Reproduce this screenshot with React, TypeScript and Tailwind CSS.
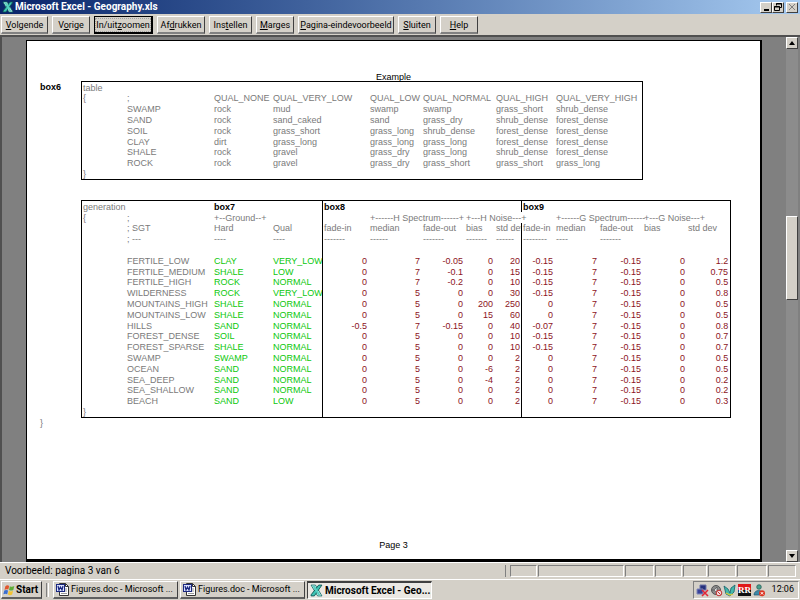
import React from "react";
import clsx from "clsx";

const raised =
  "border border-t-white border-l-white border-b-[#404040] border-r-[#404040] bg-[#d4d0c8]";
const sunken =
  "border border-t-[#808080] border-l-[#808080] border-b-white border-r-white";

const toolbarButtons = [
  { pre: "", key: "V", post: "olgende", width: "w-[47px]" },
  { pre: "V", key: "o", post: "rige", width: "w-[38px]" },
  { pre: "In/uit", key: "z", post: "oomen", width: "w-[59px]", focused: true },
  { pre: "Af", key: "d", post: "rukken", width: "w-[48px]" },
  { pre: "Ins", key: "t", post: "ellen", width: "w-[43px]" },
  { pre: "", key: "M", post: "arges", width: "w-[38px]" },
  { pre: "", key: "P", post: "agina-eindevoorbeeld", width: "w-[96px]" },
  { pre: "", key: "S", post: "luiten", width: "w-[38px]" },
  { pre: "", key: "H", post: "elp", width: "w-[38px]" },
];

const qualityRows = [
  ["{", ";", "QUAL_NONE", "QUAL_VERY_LOW", "QUAL_LOW", "QUAL_NORMAL", "QUAL_HIGH", "QUAL_VERY_HIGH"],
  ["", "SWAMP", "rock", "mud", "swamp", "swamp", "grass_short", "shrub_dense"],
  ["", "SAND", "rock", "sand_caked", "sand", "grass_dry", "shrub_dense", "forest_dense"],
  ["", "SOIL", "rock", "grass_short", "grass_long", "shrub_dense", "forest_dense", "forest_dense"],
  ["", "CLAY", "dirt", "grass_long", "grass_long", "grass_long", "forest_dense", "forest_dense"],
  ["", "SHALE", "rock", "gravel", "grass_dry", "grass_long", "shrub_dense", "forest_dense"],
  ["", "ROCK", "rock", "gravel", "grass_dry", "grass_short", "grass_short", "grass_long"],
  ["}", "", "", "", "", "", "", ""],
];

const generationRows = [
  ["FERTILE_LOW", "CLAY", "VERY_LOW", "0", "7", "-0.05", "0", "20", "-0.15", "7", "-0.15", "0", "1.2"],
  ["FERTILE_MEDIUM", "SHALE", "LOW", "0", "7", "-0.1", "0", "15", "-0.15", "7", "-0.15", "0", "0.75"],
  ["FERTILE_HIGH", "ROCK", "NORMAL", "0", "7", "-0.2", "0", "10", "-0.15", "7", "-0.15", "0", "0.5"],
  ["WILDERNESS", "ROCK", "VERY_LOW", "0", "5", "0", "0", "30", "-0.15", "7", "-0.15", "0", "0.8"],
  ["MOUNTAINS_HIGH", "SHALE", "NORMAL", "0", "5", "0", "200", "250", "0", "7", "-0.15", "0", "0.5"],
  ["MOUNTAINS_LOW", "SHALE", "NORMAL", "0", "5", "0", "15", "60", "0", "7", "-0.15", "0", "0.5"],
  ["HILLS", "SAND", "NORMAL", "-0.5", "7", "-0.15", "0", "40", "-0.07", "7", "-0.15", "0", "0.8"],
  ["FOREST_DENSE", "SOIL", "NORMAL", "0", "5", "0", "0", "10", "-0.15", "7", "-0.15", "0", "0.7"],
  ["FOREST_SPARSE", "SHALE", "NORMAL", "0", "5", "0", "0", "10", "-0.15", "7", "-0.15", "0", "0.7"],
  ["SWAMP", "SWAMP", "NORMAL", "0", "5", "0", "0", "2", "0", "7", "-0.15", "0", "0.5"],
  ["OCEAN", "SAND", "NORMAL", "0", "5", "0", "-6", "2", "0", "7", "-0.15", "0", "0.5"],
  ["SEA_DEEP", "SAND", "NORMAL", "0", "5", "0", "-4", "2", "0", "7", "-0.15", "0", "0.2"],
  ["SEA_SHALLOW", "SAND", "NORMAL", "0", "5", "0", "0", "2", "0", "7", "-0.15", "0", "0.2"],
  ["BEACH", "SAND", "LOW", "0", "5", "0", "0", "2", "0", "7", "-0.15", "0", "0.3"],
];

const headings = [
  ["", "; SGT", "Hard", "Qual", "fade-in", "median", "fade-out", "bias", "std dev", "fade-in", "median", "fade-out", "bias", "std dev"],
  ["", "; ---", "----", "----", "-------", "------", "-------", "-------", "------", "--------", "----", "-------", "", ""],
  ["", "", "", "", "", "", "", "", "", "", "", "", "", ""],
];

const tableClass =
  "table-fixed border-separate border-spacing-0 border border-black text-left text-[9px] leading-[10px] whitespace-nowrap text-[#7a7a7a]";
const cell = "p-0 pl-px align-middle font-normal";

const ExcelIcon = ({ className }: { className?: string }) => (
  <svg viewBox="0 0 12 12" className={className} aria-hidden="true">
    <path d="M1 1h4l6 10H7z" fill="#e8fbf6" stroke="#0d6b66" strokeWidth=".8" />
    <path d="M11 1H8L1 10v1h3z" fill="#3fc4b4" stroke="#0a5050" strokeWidth=".8" />
    <path d="M2 1.6h2.4L9.8 10.4H7.6z" fill="#58d0c2" />
  </svg>
);

const WordIcon = () => (
  <svg viewBox="0 0 13 13" className="size-[13px] shrink-0" aria-hidden="true">
    <path d="M3.5 .5h6l3 3v9h-9z" fill="#fff" stroke="#333" />
    <path d="M9.5 .5v3h3" fill="none" stroke="#333" />
    <path d="M9 6h2M9 8h2M5 10.5h6" stroke="#999" />
    <rect x=".5" y="1.5" width="8" height="7" fill="#dfe5ff" stroke="#1a2880" />
    <path d="M2 3l1 4 1.5-3L6 7l1-4" fill="none" stroke="#1a2880" strokeWidth="1.2" />
  </svg>
);

const WindowsIcon = () => (
  <svg viewBox="0 0 12 12" className="size-3 shrink-0" aria-hidden="true">
    <path d="M2.4 2.2C3.8 1 5 1.2 6.2 1.9L5.3 5.6C4 5 2.8 5 1.5 5.8z" fill="#e2562c" />
    <path d="M6.9 2.2c1.4.8 2.8.7 4.4-.2l-1 3.9c-1.4.8-2.8.8-4.3 0z" fill="#5fae37" />
    <path d="M1.3 6.6c1.3-.8 2.5-.8 3.8-.1l-.9 3.8C3 9.6 1.8 9.6.4 10.3z" fill="#3b6fd0" />
    <path d="M5.8 6.8c1.5.8 2.9.8 4.3 0l-1 3.7c-1.4.9-2.8.8-4.2.1z" fill="#f3c332" />
  </svg>
);

const TrayIcons = () => (
  <svg viewBox="0 0 70 13" className="h-[13px] w-[70px] shrink-0" aria-hidden="true">
    {/* network, disconnected */}
    <path d="M4 1h6v5H4z" fill="#26307c" stroke="#6a72a8" />
    <path d="M1 5h6v5H1z" fill="#38429a" stroke="#8088b8" />
    <path d="M6 6l6 6M12 6l-6 6" stroke="#e02838" strokeWidth="1.6" />
    {/* volume */}
    <circle cx="20" cy="6" r="4.5" fill="#8b8b8b" stroke="#555" />
    <path d="M16 6h2l3-3v6l-3-3" fill="#ddd" stroke="#444" strokeWidth=".6" />
    <circle cx="23" cy="9" r="2.8" fill="#f2dede" stroke="#c03030" />
    <path d="M21.5 7.5l3 3" stroke="#c03030" />
    {/* butterfly */}
    <path d="M28 2l4 3 2 4 1-5 4-3-1 7-4 4-4-2z" fill="#43b8ac" stroke="#175f68" strokeWidth=".8" />
    <path d="M30 9l4 2 3-1" fill="none" stroke="#d9c93a" strokeWidth="1.3" />
    <rect x="42" y="0" width="13" height="6" fill="#e01818" />
    <rect x="42" y="6" width="13" height="6" fill="#111" />
    <text x="42" y="9" fontSize="9" fontWeight="bold" fill="#fff" fontFamily="Liberation Serif, serif">RR</text>
    {/* messenger, offline */}
    <circle cx="63" cy="3" r="2.3" fill="#4aa08c" stroke="#1e5650" strokeWidth=".7" />
    <path d="M58 11c0-6 9-6 9 0z" fill="#3b88a8" stroke="#205870" strokeWidth=".7" />
    <circle cx="66" cy="9.3" r="3" fill="#dc3522" />
    <path d="M64.8 8.1l2.4 2.4M67.2 8.1l-2.4 2.4" stroke="#fff" />
  </svg>
);

const QualityTable = () => (
  <table className={clsx(tableClass, "w-[562px]")}>
    <colgroup>
      <col className="w-[44px]" />
      <col className="w-[87px]" />
      <col className="w-[59px]" />
      <col className="w-[97px]" />
      <col className="w-[53px]" />
      <col className="w-[73px]" />
      <col className="w-[60px]" />
      <col className="w-[87px]" />
    </colgroup>
    <tbody>
      <tr className="h-[11px]">
        <th colSpan={8} className={cell}>table</th>
      </tr>
      {qualityRows.map((row, i) => (
        <tr key={i} className="h-[11px] nth-[5n+2]:h-[10px]">
          {row.map((value, j) => (
            <td key={j} className={cell}>{value}</td>
          ))}
        </tr>
      ))}
    </tbody>
  </table>
);

// Vertical rules sit right of "Qual" and right of the first "std dev"
const rule = (col: number) => (col === 3 || col === 8) && "border-r border-black";

const GenerationTable = () => (
  <table className={clsx(tableClass, "w-[650px]")}>
    <colgroup>
      <col className="w-[44px]" />
      <col className="w-[87px]" />
      <col className="w-[59px]" />
      <col className="w-[51px]" />
      <col className="w-[46px]" />
      <col className="w-[53px]" />
      <col className="w-[43px]" />
      <col className="w-[30px]" />
      <col className="w-[27px]" />
      <col className="w-[33px]" />
      <col className="w-[44px]" />
      <col className="w-[44px]" />
      <col className="w-[44px]" />
      <col className="w-[43px]" />
    </colgroup>
    <tbody>
      <tr className="h-[11px]">
        <th colSpan={2} className={cell}>generation</th>
        <th colSpan={2} className="border-r border-black p-0 pl-px font-bold text-black">box7</th>
        <th colSpan={5} className="border-r border-black p-0 pl-px font-bold text-black">box8</th>
        <th colSpan={5} className="p-0 pl-px font-bold text-black">box9</th>
      </tr>
      <tr className="h-[11px]">
        <td className={cell}>{"{"}</td>
        <td className={cell}>;</td>
        <td colSpan={2} className={clsx(cell, "border-r border-black")}>+--Ground--+</td>
        <td className={cell} />
        <td colSpan={2} className={cell}>+------H Spectrum------+</td>
        <td colSpan={2} className={cell}>+---H Noise---+</td>
        <td className={cell} />
        <td colSpan={2} className={cell}>+------G Spectrum------</td>
        <td colSpan={2} className={cell}>+---G Noise---+</td>
      </tr>
      {headings.map((row, i) => (
        <tr key={i} className="h-[11px] nth-[5n+3]:h-[10px]">
          {row.map((value, j) => (
            <td key={j} className={clsx(cell, "overflow-hidden", rule(j))}>{value}</td>
          ))}
        </tr>
      ))}
      {generationRows.map((row) => (
        <tr key={row[0]} className="h-[11px] nth-[5n+3]:h-[10px]">
          <td className={cell} />
          {row.map((value, j) => (
            <td
              key={j}
              className={clsx(
                "overflow-hidden p-0 align-middle",
                j < 3 ? "pl-px" : "text-right text-[#8c1424]",
                j >= 3 && (j === 7 ? "pr-px" : "pr-[2px]"),
                (j === 1 || j === 2) && "text-[#0cc80c]",
                rule(j + 1)
              )}
            >
              {value}
            </td>
          ))}
        </tr>
      ))}
      <tr className="h-[11px]">
        <td colSpan={4} className={clsx(cell, "border-r border-black")}>{"}"}</td>
        <td colSpan={5} className={clsx(cell, "border-r border-black")} />
        <td colSpan={5} className={cell} />
      </tr>
    </tbody>
  </table>
);

const TitleBar = () => (
  <header className="flex h-3.5 items-center bg-linear-to-r from-[#0a246a] to-[#a6caf0] px-0.5">
    <ExcelIcon className="size-3 shrink-0" />
    <h1 className="ml-px flex-1 text-[10px] leading-3 font-bold text-white">
      Microsoft Excel - Geography.xls
    </h1>
    <div className="flex">
      <button aria-label="Minimaliseren" className={clsx(raised, "flex h-[11px] w-3 items-end justify-center pb-px")}>
        <span className="h-0.5 w-[5px] bg-black" />
      </button>
      <button aria-label="Vorig formaat" className={clsx(raised, "mr-0.5 flex h-[11px] w-3 items-center justify-center")}>
        <svg viewBox="0 0 8 8" className="size-2" aria-hidden="true">
          <path d="M2.5 2.5v-2h5v4h-2M2 1h6M.5 3.5h5v4h-5zM0 4h6" fill="none" stroke="#000" />
        </svg>
      </button>
      <button aria-label="Sluiten" className={clsx(raised, "flex h-[11px] w-3 items-center justify-center")}>
        <svg viewBox="0 0 8 8" className="size-2" aria-hidden="true">
          <path d="M1 1l6 6M7 1L1 7" stroke="#808080" />
        </svg>
      </button>
    </div>
  </header>
);

const ScrollBar = () => (
  <div className="flex w-3 flex-col bg-[#8c8c8c]">
    <button aria-label="Omhoog" className={clsx(raised, "flex h-3 items-center justify-center")}>
      <svg viewBox="0 0 6 4" className="h-1 w-1.5" aria-hidden="true"><path d="M3 0l3 4H0z" /></svg>
    </button>
    <div className="flex-[168]" />
    <div className={clsx(raised, "flex-[82]")} />
    <div className="flex-[252]" />
    <button aria-label="Omlaag" className={clsx(raised, "flex h-3 items-center justify-center")}>
      <svg viewBox="0 0 6 4" className="h-1 w-1.5" aria-hidden="true"><path d="M0 0h6L3 4z" /></svg>
    </button>
  </div>
);

const statusPanels = [
  "w-[27px]",
  "w-[86px]",
  "w-[29px]",
  "w-[27px]",
  "w-[24px]",
  "w-[28px]",
  "w-[30px]",
  "w-[28px]",
];

const App: React.FC = () => {
  return (
    <div className="flex min-h-screen flex-col bg-[#d4d0c8] font-[Roboto,'DejaVu_Sans_Condensed',sans-serif] text-[9px] text-black">
      <TitleBar />

      <nav className="flex h-[21px] items-end gap-1 pb-px pl-px">
        {toolbarButtons.map(({ pre, key, post, width, focused }) => (
          <button
            key={post}
            className={clsx(
              "flex h-[18px] shrink-0 items-center justify-center text-[9px] leading-3 whitespace-nowrap",
              width,
              focused ? "border border-r-2 border-b-2 border-black bg-[#d4d0c8]" : clsx(raised, "border-b-2 border-b-[#808080]")
            )}
          >
            <span className={clsx(focused && "outline outline-dotted outline-[#a0a0a0]")}>
              {pre}
              <u>{key}</u>
              {post}
            </span>
          </button>
        ))}
      </nav>

      <main className="flex flex-1 border-t-2 border-l-2 border-[#505050] bg-[#808080] pr-0.5">
        <section className="mt-[3px] mr-6 ml-6 flex flex-1 flex-col border-t border-r-2 border-b-3 border-l border-black bg-white pl-3 font-['Liberation_Sans',Arial,sans-serif]">
          <p className="mt-8 pr-3 text-center text-[9px] leading-[8px]">Example</p>
          <div className="grid grid-cols-[42px_1fr] text-[9px] leading-3">
            <h2 className="pl-px font-bold">box6</h2>
            <QualityTable />
            <div className="col-start-2 mt-5">
              <GenerationTable />
            </div>
            <p className="pl-px leading-[10px] text-[#7a7a7a]">{"}"}</p>
          </div>
          <p className="mt-auto pr-3 pb-2 text-center text-[9px] leading-3">Page 3</p>
        </section>
        <ScrollBar />
      </main>

      <div className="flex h-[17px] items-center gap-1 border-t border-white pr-1">
        <p className="flex-1 border-r border-[#808080] pl-[5px] text-[10px] leading-3">
          Voorbeeld: pagina 3 van 6
        </p>
        <div className="flex gap-px">
          {statusPanels.map((width, i) => (
            <div key={i} className={clsx(sunken, "h-3", width)} />
          ))}
        </div>
      </div>

      <footer className="flex h-[21px] items-center border-t border-white px-px">
        <button className={clsx(raised, "flex h-[18px] w-[41px] items-center gap-px border-b-2 border-b-[#606060] pl-px text-[10px] font-bold")}>
          <WindowsIcon />
          Start
        </button>
        <div className="mx-1 h-3.5 w-[3px] border-r border-l border-r-white border-l-[#808080]" />
        <div className="flex flex-1 gap-0.5">
          {[0, 1].map((i) => (
            <button
              key={i}
              className={clsx(raised, "flex h-[18px] w-[125px] items-center gap-0.5 border-b-2 border-b-[#606060] pl-0.5 text-[9px] whitespace-nowrap")}
            >
              <WordIcon />
              Figures.doc - Microsoft ...
            </button>
          ))}
          <button className="flex h-[18px] w-[125px] items-center gap-0.5 border border-t-2 border-t-[#404040] border-r-white border-b-white border-l-[#404040] bg-[#ebe8e3] pl-0.5 text-[10px] font-bold whitespace-nowrap">
            <ExcelIcon className="size-[13px] shrink-0" />
            Microsoft Excel - Geo...
          </button>
        </div>
        <div className={clsx(sunken, "flex h-[18px] w-[106px] items-center justify-between pr-1 pl-0.5")}>
          <TrayIcons />
          <time>12:06</time>
        </div>
      </footer>
    </div>
  );
};

export default App;
